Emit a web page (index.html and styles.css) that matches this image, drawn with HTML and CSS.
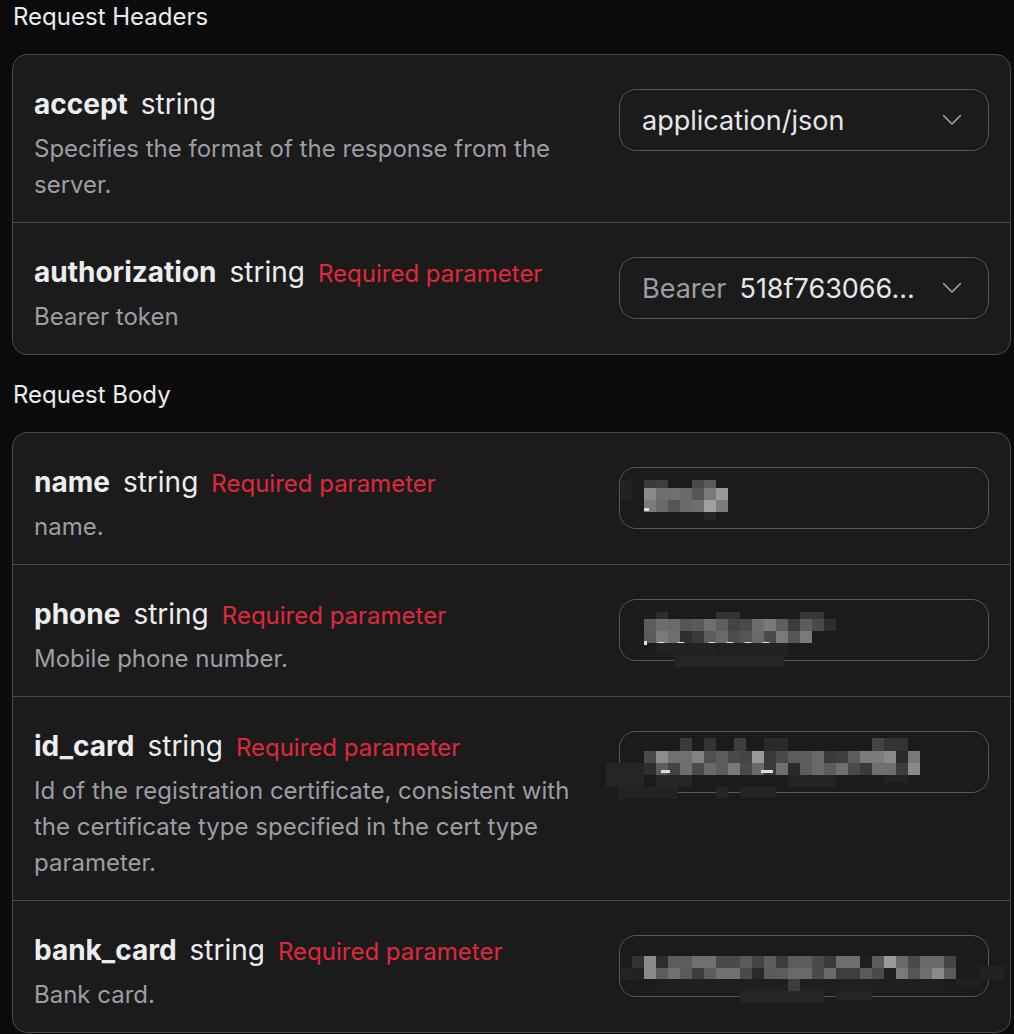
FILE: index.html
```html
<!DOCTYPE html>
<html lang="en">
<head>
<meta charset="utf-8">
<title>Request</title>
<link rel="stylesheet" href="styles.css">
</head>
<body>
<main class="page">
  <h2 class="section-title">Request Headers</h2>
  <div class="card">
    <div class="row">
      <div class="info">
        <div class="head"><span class="name">accept</span><span class="type">string</span></div>
        <p class="desc">Specifies the format of the response from the server.</p>
      </div>
      <div class="field select">
        <span class="value">application/json</span>
        <svg class="chev" width="20" height="12" viewBox="0 0 20 12"><path d="M1.5 1.5 L10 10 L18.5 1.5" fill="none" stroke="#a4a4a8" stroke-width="1.6" stroke-linecap="round" stroke-linejoin="round"/></svg>
      </div>
    </div>
    <div class="row">
      <div class="info">
        <div class="head"><span class="name">authorization</span><span class="type">string</span><span class="req">Required parameter</span></div>
        <p class="desc">Bearer token</p>
      </div>
      <div class="field select">
        <span class="prefix">Bearer</span><span class="value">518f763066...</span>
        <svg class="chev" width="20" height="12" viewBox="0 0 20 12"><path d="M1.5 1.5 L10 10 L18.5 1.5" fill="none" stroke="#a4a4a8" stroke-width="1.6" stroke-linecap="round" stroke-linejoin="round"/></svg>
      </div>
    </div>
  </div>

  <h2 class="section-title second">Request Body</h2>
  <div class="card">
    <div class="row">
      <div class="info">
        <div class="head"><span class="name">name</span><span class="type">string</span><span class="req">Required parameter</span></div>
        <p class="desc">name.</p>
      </div>
      <div class="field">
        <svg class="mosaic m-name" width="120" height="50" viewBox="0 0 120 50">
          <rect x="1" y="4" width="11" height="20" fill="#222224"/>
          <rect x="24" y="4" width="12" height="8" fill="#39393b"/><rect x="36" y="4" width="12" height="8" fill="#3e3e40"/><rect x="72" y="4" width="12" height="8" fill="#4a4a4c"/><rect x="84" y="4" width="12" height="8" fill="#5a5a5c"/>
          <rect x="24" y="12" width="12" height="12" fill="#8a8a8c"/><rect x="36" y="12" width="12" height="12" fill="#6f6f71"/><rect x="48" y="12" width="12" height="12" fill="#707072"/><rect x="60" y="12" width="12" height="12" fill="#6a6a6c"/><rect x="72" y="12" width="12" height="12" fill="#565658"/><rect x="84" y="12" width="12" height="12" fill="#7a7a7c"/><rect x="96" y="12" width="12" height="12" fill="#9a9a9c"/>
          <rect x="24" y="24" width="12" height="12" fill="#7c7c7e"/><rect x="36" y="24" width="12" height="12" fill="#6a6a6c"/><rect x="48" y="24" width="12" height="12" fill="#565658"/><rect x="60" y="24" width="12" height="12" fill="#6a6a6c"/><rect x="72" y="24" width="12" height="12" fill="#6e6e70"/><rect x="84" y="24" width="12" height="12" fill="#a0a0a2"/><rect x="96" y="24" width="12" height="12" fill="#7c7c7e"/>
          <rect x="24" y="32" width="5" height="3" fill="#dedee0"/><rect x="84" y="36" width="12" height="8" fill="#262628"/>
        </svg>
      </div>
    </div>
    <div class="row">
      <div class="info">
        <div class="head"><span class="name">phone</span><span class="type">string</span><span class="req">Required parameter</span></div>
        <p class="desc">Mobile phone number.</p>
      </div>
      <div class="field">
        <svg class="mosaic m-phone" width="230" height="56" viewBox="0 0 230 56">
          <rect x="36" y="0" width="12" height="7" fill="#2e2e30"/><rect x="96" y="0" width="24" height="7" fill="#333335"/><rect x="180" y="0" width="24" height="7" fill="#363638"/>
          <rect x="24" y="7" width="12" height="12" fill="#5c5c5e"/><rect x="36" y="7" width="12" height="12" fill="#6e6e70"/><rect x="48" y="7" width="12" height="12" fill="#6a6a6c"/><rect x="60" y="7" width="12" height="12" fill="#555557"/><rect x="72" y="7" width="12" height="12" fill="#5a5a5c"/><rect x="84" y="7" width="12" height="12" fill="#707072"/><rect x="96" y="7" width="12" height="12" fill="#5f5f61"/><rect x="108" y="7" width="12" height="12" fill="#444446"/><rect x="120" y="7" width="12" height="12" fill="#4a4a4c"/><rect x="132" y="7" width="12" height="12" fill="#6e6e70"/><rect x="144" y="7" width="12" height="12" fill="#7a7a7c"/><rect x="156" y="7" width="12" height="12" fill="#5e5e60"/><rect x="168" y="7" width="12" height="12" fill="#3c3c3e"/><rect x="180" y="7" width="12" height="12" fill="#5c5c5e"/><rect x="192" y="7" width="12" height="12" fill="#4a4a4c"/><rect x="204" y="7" width="12" height="12" fill="#2e2e30"/>
          <rect x="24" y="19" width="12" height="12" fill="#5a5a5c"/><rect x="36" y="19" width="12" height="12" fill="#7a7a7c"/><rect x="48" y="19" width="12" height="12" fill="#6f6f71"/><rect x="60" y="19" width="12" height="12" fill="#2e2e30"/><rect x="72" y="19" width="12" height="12" fill="#3a3a3c"/><rect x="84" y="19" width="12" height="12" fill="#5c5c5e"/><rect x="96" y="19" width="12" height="12" fill="#6a6a6c"/><rect x="108" y="19" width="12" height="12" fill="#4c4c4e"/><rect x="120" y="19" width="12" height="12" fill="#555557"/><rect x="132" y="19" width="12" height="12" fill="#6a6a6c"/><rect x="144" y="19" width="12" height="12" fill="#4a4a4c"/><rect x="156" y="19" width="12" height="12" fill="#7a7a7c"/><rect x="168" y="19" width="12" height="12" fill="#555557"/><rect x="180" y="19" width="12" height="12" fill="#7a7a7c"/>
          <rect x="24" y="29" width="3" height="4" fill="#e0e0e2"/><rect x="37" y="30" width="8" height="3" rx="1.5" fill="#e0e0e2"/><rect x="57" y="30" width="8" height="3" rx="1.5" fill="#e0e0e2"/><rect x="88" y="30" width="8" height="3" rx="1.5" fill="#e0e0e2"/><rect x="106" y="30" width="8" height="3" rx="1.5" fill="#e0e0e2"/><rect x="124" y="30" width="8" height="3" rx="1.5" fill="#e0e0e2"/><rect x="142" y="30" width="8" height="3" rx="1.5" fill="#e0e0e2"/>
          <rect x="36" y="31" width="132" height="12" fill="#222224"/><rect x="54" y="43" width="110" height="12" fill="#252527"/><rect x="96" y="31" width="36" height="12" fill="#1f1f21"/>
        </svg>
      </div>
    </div>
    <div class="row">
      <div class="info">
        <div class="head"><span class="name">id_card</span><span class="type">string</span><span class="req">Required parameter</span></div>
        <p class="desc">Id of the registration certificate, consistent with the certificate type specified in the cert type parameter.</p>
      </div>
      <div class="field">
        <svg class="mosaic m-id" width="330" height="62" viewBox="0 0 330 62">
          <rect x="0" y="25" width="38" height="24" fill="#252527"/><rect x="12" y="49" width="60" height="12" fill="#232325"/>
          <rect x="74" y="0" width="12" height="13" fill="#3a3a3c"/><rect x="98" y="0" width="12" height="13" fill="#333335"/><rect x="128" y="0" width="12" height="13" fill="#3e3e40"/><rect x="158" y="0" width="24" height="13" fill="#2a2a2c"/><rect x="266" y="0" width="12" height="13" fill="#444446"/><rect x="278" y="0" width="24" height="13" fill="#333335"/>
          <rect x="38" y="13" width="12" height="12" fill="#4a4a4c"/><rect x="50" y="13" width="12" height="12" fill="#8c8c8e"/><rect x="62" y="13" width="12" height="12" fill="#707072"/><rect x="74" y="13" width="12" height="12" fill="#707072"/><rect x="86" y="13" width="12" height="12" fill="#828284"/><rect x="98" y="13" width="12" height="12" fill="#505052"/><rect x="110" y="13" width="12" height="12" fill="#5c5c5e"/><rect x="122" y="13" width="12" height="12" fill="#4a4a4c"/><rect x="134" y="13" width="12" height="12" fill="#444446"/><rect x="146" y="13" width="12" height="12" fill="#9a9a9c"/><rect x="158" y="13" width="12" height="12" fill="#3a3a3c"/><rect x="170" y="13" width="12" height="12" fill="#4a4a4c"/><rect x="182" y="13" width="12" height="12" fill="#5c5c5e"/><rect x="194" y="13" width="12" height="12" fill="#5c5c5e"/><rect x="206" y="13" width="12" height="12" fill="#6a6a6c"/><rect x="218" y="13" width="12" height="12" fill="#3a3a3c"/><rect x="230" y="13" width="12" height="12" fill="#3e3e40"/><rect x="242" y="13" width="12" height="12" fill="#5c5c5e"/><rect x="254" y="13" width="12" height="12" fill="#7a7a7c"/><rect x="266" y="13" width="12" height="12" fill="#7c7c7e"/><rect x="278" y="13" width="12" height="12" fill="#8a8a8c"/><rect x="290" y="13" width="12" height="12" fill="#2a2a2c"/><rect x="302" y="13" width="12" height="12" fill="#787878"/>
          <rect x="38" y="25" width="12" height="12" fill="#2e2e30"/><rect x="50" y="25" width="12" height="12" fill="#5c5c5e"/><rect x="62" y="25" width="12" height="12" fill="#444446"/><rect x="74" y="25" width="12" height="12" fill="#6e6e70"/><rect x="86" y="25" width="12" height="12" fill="#4a4a4c"/><rect x="98" y="25" width="12" height="12" fill="#6a6a6c"/><rect x="110" y="25" width="12" height="12" fill="#5c5c5e"/><rect x="122" y="25" width="12" height="12" fill="#7a7a7c"/><rect x="134" y="25" width="12" height="12" fill="#4a4a4c"/><rect x="146" y="25" width="12" height="12" fill="#6a6a6c"/><rect x="158" y="25" width="12" height="12" fill="#3a3a3c"/><rect x="170" y="25" width="12" height="12" fill="#707072"/><rect x="182" y="25" width="12" height="12" fill="#2a2a2c"/><rect x="194" y="25" width="12" height="12" fill="#5c5c5e"/><rect x="206" y="25" width="12" height="12" fill="#6a6a6c"/><rect x="218" y="25" width="12" height="12" fill="#5c5c5e"/><rect x="230" y="25" width="12" height="12" fill="#6e6e70"/><rect x="242" y="25" width="12" height="12" fill="#4a4a4c"/><rect x="254" y="25" width="12" height="12" fill="#3a3a3c"/><rect x="266" y="25" width="12" height="12" fill="#707072"/><rect x="278" y="25" width="12" height="12" fill="#6e6e70"/><rect x="290" y="25" width="12" height="12" fill="#3c3c3e"/><rect x="302" y="25" width="12" height="12" fill="#8a8a8c"/>
          <rect x="55" y="32" width="9" height="3" fill="#dedee0"/><rect x="155" y="32" width="12" height="3" fill="#dedee0"/>
          <rect x="50" y="37" width="36" height="12" fill="#262628"/><rect x="182" y="37" width="48" height="12" fill="#242426"/><rect x="278" y="37" width="24" height="8" fill="#232325"/>
          <rect x="110" y="49" width="12" height="11" fill="#262628"/><rect x="134" y="49" width="36" height="11" fill="#242426"/>
        </svg>
      </div>
    </div>
    <div class="row">
      <div class="info">
        <div class="head"><span class="name">bank_card</span><span class="type">string</span><span class="req">Required parameter</span></div>
        <p class="desc">Bank card.</p>
      </div>
      <div class="field">
        <svg class="mosaic m-bank" width="390" height="48" viewBox="0 0 390 48">
          <rect x="1" y="12" width="11" height="12" fill="#232325"/>
          <rect x="12" y="0" width="12" height="12" fill="#333335"/><rect x="24" y="0" width="12" height="12" fill="#8a8a8c"/><rect x="36" y="0" width="12" height="12" fill="#2e2e30"/><rect x="48" y="0" width="12" height="12" fill="#5c5c5e"/><rect x="60" y="0" width="12" height="12" fill="#5c5c5e"/><rect x="72" y="0" width="12" height="12" fill="#707072"/><rect x="84" y="0" width="12" height="12" fill="#707072"/><rect x="96" y="0" width="12" height="12" fill="#4a4a4c"/><rect x="108" y="0" width="12" height="12" fill="#4a4a4c"/><rect x="120" y="0" width="12" height="12" fill="#5a5a5c"/><rect x="132" y="0" width="12" height="12" fill="#444446"/><rect x="144" y="0" width="12" height="12" fill="#5c5c5e"/><rect x="156" y="0" width="12" height="12" fill="#3c3c3e"/><rect x="168" y="0" width="12" height="12" fill="#5c5c5e"/><rect x="180" y="0" width="12" height="12" fill="#5c5c5e"/><rect x="192" y="0" width="12" height="12" fill="#4a4a4c"/><rect x="204" y="0" width="12" height="12" fill="#3a3a3c"/><rect x="216" y="0" width="12" height="12" fill="#6e6e70"/><rect x="228" y="0" width="12" height="12" fill="#6e6e70"/><rect x="240" y="0" width="12" height="12" fill="#1f1f21"/><rect x="252" y="0" width="12" height="12" fill="#5c5c5e"/><rect x="264" y="0" width="12" height="12" fill="#9a9a9c"/><rect x="276" y="0" width="12" height="12" fill="#6a6a6c"/><rect x="288" y="0" width="12" height="12" fill="#4a4a4c"/><rect x="300" y="0" width="12" height="12" fill="#6a6a6c"/><rect x="312" y="0" width="12" height="12" fill="#6a6a6c"/><rect x="324" y="0" width="12" height="12" fill="#444446"/>
          <rect x="12" y="12" width="12" height="11" fill="#222224"/><rect x="24" y="12" width="12" height="11" fill="#8a8a8c"/><rect x="36" y="12" width="12" height="11" fill="#5c5c5e"/><rect x="48" y="12" width="12" height="11" fill="#707072"/><rect x="60" y="12" width="12" height="11" fill="#5a5a5c"/><rect x="72" y="12" width="12" height="11" fill="#3c3c3e"/><rect x="84" y="12" width="12" height="11" fill="#5c5c5e"/><rect x="96" y="12" width="12" height="11" fill="#707072"/><rect x="108" y="12" width="12" height="11" fill="#707072"/><rect x="120" y="12" width="12" height="11" fill="#4a4a4c"/><rect x="132" y="12" width="12" height="11" fill="#2a2a2c"/><rect x="144" y="12" width="12" height="11" fill="#5a5a5c"/><rect x="156" y="12" width="12" height="11" fill="#5c5c5e"/><rect x="168" y="12" width="12" height="11" fill="#6a6a6c"/><rect x="180" y="12" width="12" height="11" fill="#6a6a6c"/><rect x="192" y="12" width="12" height="11" fill="#4a4a4c"/><rect x="204" y="12" width="12" height="11" fill="#6a6a6c"/><rect x="216" y="12" width="12" height="11" fill="#3e3e40"/><rect x="228" y="12" width="12" height="11" fill="#3e3e40"/><rect x="240" y="12" width="12" height="11" fill="#5a5a5c"/><rect x="252" y="12" width="12" height="11" fill="#4a4a4c"/><rect x="264" y="12" width="12" height="11" fill="#1f1f21"/><rect x="276" y="12" width="12" height="11" fill="#7a7a7c"/><rect x="288" y="12" width="12" height="11" fill="#555557"/><rect x="300" y="12" width="12" height="11" fill="#6e6e70"/><rect x="312" y="12" width="12" height="11" fill="#8a8a8c"/><rect x="324" y="12" width="12" height="11" fill="#5a5a5c"/><rect x="360" y="10" width="24" height="14" fill="#222224"/>
          <rect x="36" y="23" width="132" height="12" fill="#1f1f21"/><rect x="168" y="23" width="12" height="12" fill="#3c3c3e"/><rect x="180" y="23" width="144" height="12" fill="#1f1f21"/><rect x="336" y="23" width="24" height="8" fill="#202022"/>
          <rect x="120" y="35" width="84" height="11" fill="#262628"/><rect x="216" y="35" width="36" height="9" fill="#252527"/>
        </svg>
      </div>
    </div>
  </div>
</main>
</body>
</html>
```

FILE: styles.css
```css
html, body {
  margin: 0;
  padding: 0;
  background: #0b0b0b;
}

body {
  font-family: Inter, "Noto Sans", "Liberation Sans", sans-serif;
  color: #ececee;
  -webkit-font-smoothing: antialiased;
}

.page {
  padding: 2px 3px 0 12px;
}

.section-title {
  margin: 0 0 22px 1px;
  font-size: 24px;
  line-height: 30px;
  font-weight: 400;
  color: #ececee;
}

.section-title.second {
  margin-top: 25px;
}

.card {
  background: #1b1b1b;
  border: 1px solid #4a4a4b;
  border-radius: 15px;
  overflow: hidden;
}

.row {
  display: flex;
  align-items: flex-start;
  gap: 34px;
  padding: 34px 21px 19px 21px;
}

.row + .row {
  border-top: 1px solid #4a4a4b;
}

.info {
  flex: 1;
  min-width: 0;
}

.head {
  display: flex;
  align-items: baseline;
  gap: 13px;
  height: 30px;
  line-height: 30px;
  white-space: nowrap;
}

.name {
  font-size: 28px;
  font-weight: 700;
  color: #ededef;
}

.type {
  font-size: 28px;
  font-weight: 400;
  color: #ececee;
}

.req {
  font-size: 24px;
  color: #e0283c;
}

.desc {
  margin: 12px 0 0;
  font-size: 24px;
  line-height: 36px;
  color: #9d9da3;
}

.field {
  position: relative;
  flex: none;
  box-sizing: border-box;
  width: 370px;
  height: 62px;
  border: 1.5px solid #58585a;
  border-radius: 17px;
  display: flex;
  align-items: center;
  gap: 13px;
  padding: 0 26px 0 22px;
  font-size: 27px;
  color: #e6e6ea;
}

.select .value {
  flex: none;
}

.select .prefix {
  color: #9d9da3;
}

.chev {
  margin-left: auto;
  flex: none;
}

.mosaic {
  position: absolute;
  overflow: visible;
}

.m-name { left: 0; top: 8px; }
.m-phone { left: 0; top: 12px; }
.m-id { left: -14px; top: 6px; }
.m-bank { left: 0; top: 20px; }
```
